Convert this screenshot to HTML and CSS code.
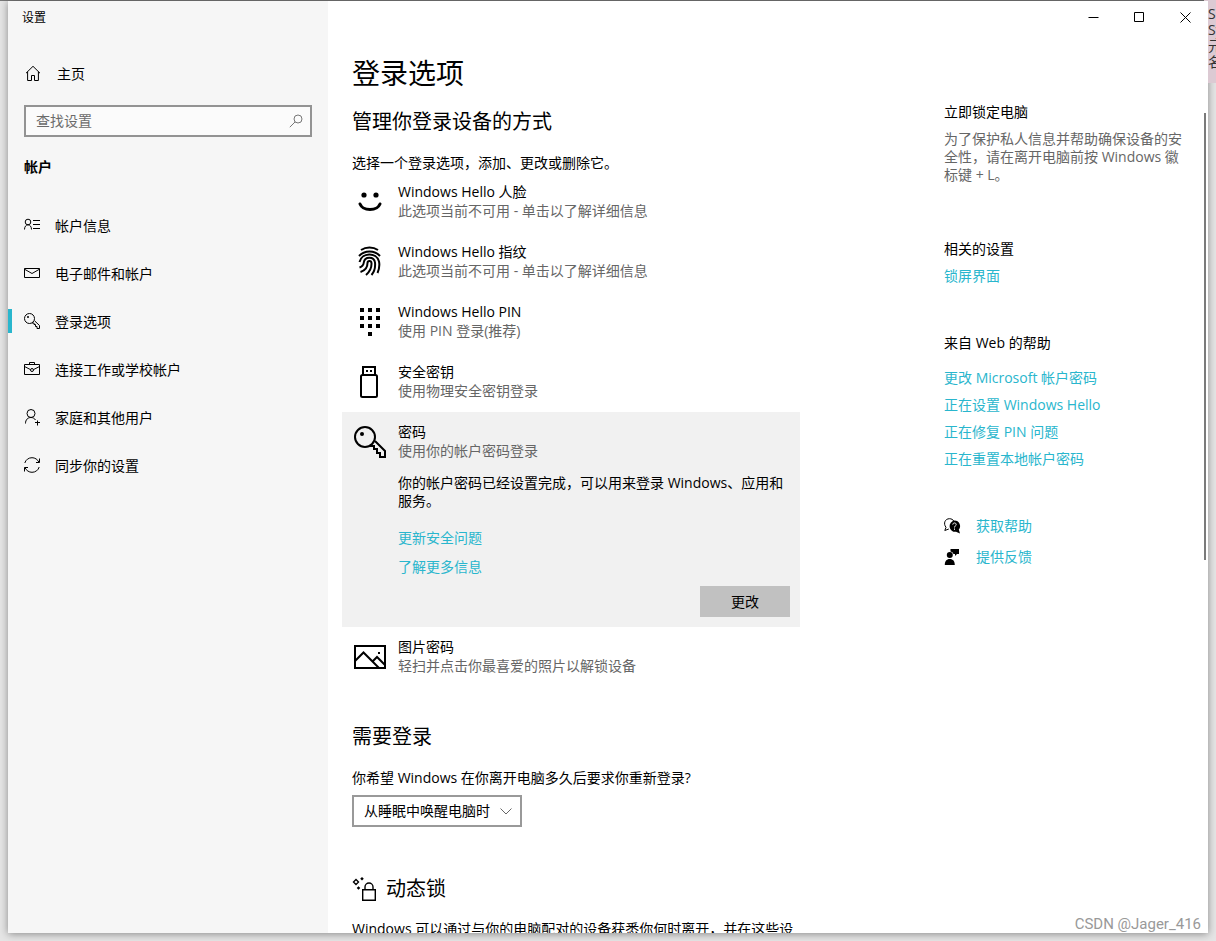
FILE: index.html
```html
<!DOCTYPE html>
<html lang="zh-CN">
<head>
<meta charset="utf-8">
<meta name="viewport" content="width=device-width, initial-scale=1">
<title>设置</title>
<link rel="stylesheet" href="styles.css">
</head>
<body>
<div class="backdrop-note" aria-hidden="true"><span>S</span><span>Sy</span><span>元</span><span>名</span></div>
<div class="window">
  <aside class="sidebar">
    <div class="app-title">设置</div>
    <a class="home" href="#home">
      <svg class="icon16" viewBox="0 0 16 16"><path d="M1 8.2 8 1.3l7 6.9M2.6 6.8v8.7h3.9v-5h3v5h3.9V6.8"/></svg>
      <span>主页</span>
    </a>
    <form class="search">
      <input type="search" class="search-input" placeholder="查找设置" aria-label="查找设置">
      <button type="button" class="search-btn" aria-label="搜索"><svg viewBox="0 0 14 14"><circle cx="9" cy="5" r="4"/><path d="M6.1 7.9.8 13.2"/></svg></button>
    </form>
    <h2 class="side-heading">帐户</h2>
    <nav class="nav">
      <a class="nav-item" href="#info"><svg class="icon16" viewBox="0 0 16 16"><circle cx="4" cy="5" r="2.8"/><path d="M.5 12.500c0-2.800 1.500-4.700 3.500-4.700s3.500 1.900 3.500 4.700M9 3.500h7M9 7.500h7M9 11.500h7"/></svg><span>帐户信息</span></a>
      <a class="nav-item" href="#mail"><svg class="icon16" viewBox="0 0 16 16"><path d="M.5 3.500h15v9H.5zM.5 4.200 8 8.500l7.500-4.300"/></svg><span>电子邮件和帐户</span></a>
      <a class="nav-item is-active" href="#signin" aria-current="page"><svg class="icon16" viewBox="0 0 32 32"><g class="stroke2"><path d="M21 15.500 31 25v6h-5v-4h-3v-4h-3v-3h-4.500"/><circle cx="11" cy="11" r="10"/></g><circle class="solid" cx="8" cy="8" r="2"/></svg><span>登录选项</span></a>
      <a class="nav-item" href="#work"><svg class="icon16" viewBox="0 0 16 16"><path d="M.5 3.500h15v10H.5zM5.500 3.500v-2h5v2M.5 5.500l5.800 3M15.500 5.500l-5.800 3"/><circle cx="8" cy="9" r="1.500"/></svg><span>连接工作或学校帐户</span></a>
      <a class="nav-item" href="#family"><svg class="icon16" viewBox="0 0 16 16"><circle cx="7" cy="4.500" r="4"/><path d="M1.500 14.500c0-3.700 2.200-6 5.500-6 2 0 3.600 1 4.500 2.500M13.500 11.500v5M11 13.500h5"/></svg><span>家庭和其他用户</span></a>
      <a class="nav-item" href="#sync"><svg class="icon16" viewBox="0 0 16 16"><path d="M.8 6C1.800 2.700 4.600.7 8 .7c3 0 5.600 1.700 7 4.600M15.500 1.500v4H12M15.200 10c-1 3.300-3.800 5.300-7.200 5.300-3 0-5.600-1.700-7-4.600M.5 14.500v-4H4"/></svg><span>同步你的设置</span></a>
    </nav>
  </aside>

  <div class="pane">
    <div class="caption">
      <button type="button" aria-label="最小化"><svg viewBox="0 0 11 11"><path d="M.5 5.500h10"/></svg></button>
      <button type="button" aria-label="最大化"><svg viewBox="0 0 11 11"><path d="M.5.5h9v9h-9z"/></svg></button>
      <button type="button" aria-label="关闭"><svg viewBox="0 0 11 11"><path d="m.5.5 10 10M10.500.5l-10 10"/></svg></button>
    </div>
    <div class="columns">
      <main class="content">
        <h1>登录选项</h1>
        <h2>管理你登录设备的方式</h2>
        <p class="intro">选择一个登录选项，添加、更改或删除它。</p>
        <ul class="options">
          <li class="option">
            <svg class="icon32" viewBox="0 0 32 32"><g class="solid"><circle cx="10" cy="9" r="2.600"/><circle cx="22" cy="9" r="2.600"/></g><path class="thick" d="M6 18c1.500 3.600 5.500 5.500 10 5.500s8.500-1.900 10-5.500"/></svg>
            <div class="option-body"><h3>Windows Hello 人脸</h3><p class="muted">此选项当前不可用 - 单击以了解详细信息</p></div>
          </li>
          <li class="option">
            <svg class="icon32" viewBox="0 0 32 32"><path class="stroke2" d="M7 4c5-3.300 12-3.300 17 0M5 10C10.500 4 20.500 3.800 26 10M5.500 16C7.500 6.500 22.500 5.500 25 15.500c.8 3.600.2 7.500-1.500 11.500M5.500 21.500c3-1 4-2.500 4.300-5 .7-6.500 10.400-6.500 11.200 0 .5 5-.8 9.500-3.500 12.500M6.500 26c5-1.500 7-5 7-9 .2-2.700 3.800-2.500 4 .2.200 5-2.200 9-5.500 11.800"/></svg>
            <div class="option-body"><h3>Windows Hello 指纹</h3><p class="muted">此选项当前不可用 - 单击以了解详细信息</p></div>
          </li>
          <li class="option">
            <svg class="icon32" viewBox="0 0 32 32"><path class="solid" d="M6 2h4v4H6zM14 2h4v4h-4zM22 2h4v4h-4zM6 10h4v4H6zM14 10h4v4h-4zM22 10h4v4h-4zM6 18h4v4H6zM14 18h4v4h-4zM22 18h4v4h-4zM14 26h4v4h-4z"/></svg>
            <div class="option-body"><h3>Windows Hello PIN</h3><p class="muted">使用 PIN 登录(推荐)</p></div>
          </li>
          <li class="option">
            <svg class="icon32" viewBox="0 0 32 32"><path class="stroke2" d="M9 9V1h12v8"/><rect class="stroke2" x="7" y="9" width="16" height="22" rx="1.500"/><path class="solid" d="M12 4h2v2h-2zM16 4h2v2h-2z"/></svg>
            <div class="option-body"><h3>安全密钥</h3><p class="muted">使用物理安全密钥登录</p></div>
          </li>
          <li class="option is-open">
            <svg class="icon32" viewBox="0 0 32 32"><path class="stroke2" d="M21 15 31 25v6h-5v-4h-3v-4h-3v-3h-4"/><circle class="stroke2" cx="11" cy="11" r="10"/><circle class="solid" cx="8" cy="8" r="2"/></svg>
            <div class="option-body">
              <h3>密码</h3><p class="muted">使用你的帐户密码登录</p>
              <p class="detail">你的帐户密码已经设置完成，可以用来登录 Windows、应用和服务。</p>
              <a class="detail-link" href="#questions">更新安全问题</a>
              <a class="detail-link" href="#more">了解更多信息</a>
              <button type="button" class="change">更改</button>
            </div>
          </li>
          <li class="option">
            <svg class="icon32" viewBox="0 0 32 32"><path class="stroke2" d="M1 5h30v22H1zM1 20l8.500-8.500L25 27M18.500 20.500l4.500-4.500 8 8"/><path class="solid" d="M24 11h2v2h-2z"/></svg>
            <div class="option-body"><h3>图片密码</h3><p class="muted">轻扫并点击你最喜爱的照片以解锁设备</p></div>
          </li>
        </ul>

        <h2 class="section">需要登录</h2>
        <label class="question" for="require">你希望 Windows 在你离开电脑多久后要求你重新登录?</label>
        <div class="select">
          <select id="require"><option>从睡眠中唤醒电脑时</option><option>从不</option></select>
          <svg viewBox="0 0 12 7"><path d="m.5.5 5.500 5.500L11.500.5"/></svg>
        </div>

        <h2 class="section lock"><svg viewBox="0 0 24 24"><path class="lock-line" d="M10.700 12.700h12.600v10.600H10.700zM13 12.700V10a4 4 0 0 1 8 0v2.700M4 2.500 6.500 5 4 7.500 1.500 5z"/><path class="solid" d="m10 0 1.800 1.800L10 3.600 8.200 1.800zM6.500 9.200l1.800 1.800-1.800 1.800L4.700 11z"/></svg><span>动态锁</span></h2>
        <p class="dynamic">Windows 可以通过与你的电脑配对的设备获悉你何时离开，并在这些设</p>
      </main>

      <aside class="related">
        <section class="lock-now">
          <h3>立即锁定电脑</h3>
          <p class="muted">为了保护私人信息并帮助确保设备的安全性，请在离开电脑前按 Windows 徽标键 + L。</p>
        </section>
        <section class="links">
          <h3>相关的设置</h3>
          <a href="#lockscreen">锁屏界面</a>
        </section>
        <section class="links web-help">
          <h3>来自 Web 的帮助</h3>
          <a href="#h1">更改 Microsoft 帐户密码</a>
          <a href="#h2">正在设置 Windows Hello</a>
          <a href="#h3">正在修复 PIN 问题</a>
          <a href="#h4">正在重置本地帐户密码</a>
        </section>
        <section class="support">
          <a href="#help"><svg class="icon16" viewBox="0 0 16 16"><path d="M.8 12.500 2 9.300C-1 5.500 1 .7 5.500.7c2 0 3.500 1 4.300 2.300M.8 12.500l4-1.500"/><path class="solid" d="M10.500 2.500a5.500 5.500 0 0 1 4.300 9l1.200 4-4-1.700A5.600 5.600 0 1 1 10.500 2.500z"/><path class="mark" d="M8.800 6.600c0-2.200 3.400-2.200 3.400 0 0 1.300-1.700 1.300-1.700 2.900M10.500 10.500v1.300"/></svg><span>获取帮助</span></a>
          <a href="#feedback"><svg class="icon16" viewBox="0 0 16 16"><path class="solid" d="M6.500 0H15v5h-2l-2 2V5H9.500a3.500 3.500 0 0 0-3-2.500zM5.800 3a3 3 0 1 1 0 6 3 3 0 0 1 0-6zM.8 16c0-3.800 1.700-6 5-6s5 2.200 5 6z"/></svg><span>提供反馈</span></a>
        </section>
      </aside>
    </div>
    <div class="scroll-thumb"></div>
  </div>
</div>
<div class="watermark">CSDN @Jager_416</div>
</body>
</html>
```
FILE: styles.css
```css
* { box-sizing: border-box; margin: 0; padding: 0; }

body {
  height: 100vh;
  padding: 1px 8px 8px;
  overflow: hidden;
  position: relative;
  background: linear-gradient(#777 1px, #e5e5e5 1px);
  color: #000;
  font: 14px/19px "Open Sans", "Noto Sans CJK SC", sans-serif;
}

a { color: #29b6cd; text-decoration: none; }
button, input, select { font: inherit; color: inherit; border: 0; border-radius: 0; }
h1, h2, h3 { font-weight: 400; }
h3 { font-size: 14px; }
ul { list-style: none; }
svg { fill: none; stroke: #000; flex: none; }
.stroke2 { stroke-width: 2; }
.thick { stroke-width: 3; stroke-linecap: round; }
.solid { fill: #000; stroke: none; }
.icon16 { width: 16px; height: 16px; overflow: visible; }
.icon32 { width: 32px; height: 32px; }
.muted { color: #666; }

.backdrop-note {
  position: absolute;
  top: 0;
  right: 0;
  width: 12px;
  height: 83px;
  padding-top: 6px;
  overflow: hidden;
  display: flex;
  flex-direction: column;
  background: #dccad3;
  font-size: 14px;
  line-height: 16px;
  color: #333;
}
.backdrop-note span { padding-left: 4px; }

.window {
  position: relative;
  height: 100%;
  display: flex;
  overflow: hidden;
  background: #fff;
}
body::before {
  content: "";
  position: absolute;
  inset: 1px 8px 8px;
  box-shadow: 0 1px 8px #0006;
}

.sidebar { width: 320px; flex: none; background: #f6f6f6; }
.app-title { padding: 7px 14px 0; font-size: 12px; line-height: 19px; }
.home {
  display: flex;
  align-items: center;
  gap: 16px;
  height: 48px;
  margin-top: 22px;
  padding-left: 17px;
  color: #000;
}
.search {
  display: flex;
  height: 32px;
  margin: 8px 16px 0;
  border: 2px solid #939393;
  background: #fbfbfb;
}
.search-input { flex: 1; min-width: 0; padding: 0 10px 2px; background: none; outline: 0; appearance: none; }
.search-input::placeholder { color: #6b6b6b; opacity: 1; }
.search-btn { width: 28px; display: grid; place-items: center; background: none; }
.search-btn svg { width: 14px; height: 14px; stroke: #777; }
.side-heading { margin: 20px 16px 0; font-size: 14px; line-height: 20px; font-weight: 700; }
.nav { margin-top: 24px; }
.nav-item {
  display: flex;
  align-items: center;
  gap: 15px;
  height: 48px;
  padding-left: 16px;
  color: #000;
}
.nav-item.is-active { background: linear-gradient(#29b6cd, #29b6cd) 0 12px / 4px 24px no-repeat; }

.pane { flex: 1; min-width: 0; position: relative; }
.caption { display: flex; justify-content: flex-end; height: 32px; }
.caption button { width: 46px; display: grid; place-items: center; background: none; }
.caption svg { width: 11px; height: 11px; }
.columns {
  display: grid;
  grid-template-columns: minmax(0, 1fr) 240px;
  gap: 144px;
  padding: 0 24px;
}

.content h1 { margin-top: 20px; font-size: 28px; line-height: 40px; }
.content h2 { font-size: 20px; line-height: 28px; }
.content h1 + h2 { margin-top: 15px; }
.intro { margin-top: 17px; }
.options { margin: 0 0 0 -10px; }
.option {
  display: flex;
  gap: 12px;
  min-height: 60px;
  padding: 10px 10px 10px 12px;
}
.option .icon32 { margin-top: 4px; }
.option.is-open { background: #f1f1f1; }
.option-body { flex: 1; min-width: 0; display: flex; flex-direction: column; }
.detail { margin-top: 14px; line-height: 18px; }
.detail-link { margin-top: 10px; }
.detail + .detail-link { margin-top: 18px; }
.change {
  align-self: flex-end;
  width: 90px;
  height: 31px;
  margin-top: 10px;
  background: #c1c1c1;
}

.content .section { margin-top: 36px; }
.question { display: block; margin-top: 17px; }
.select { position: relative; width: 170px; height: 32px; margin-top: 8px; }
.select select {
  width: 100%;
  height: 100%;
  padding: 0 10px 2px;
  border: 2px solid #999;
  background: #fff;
  appearance: none;
}
.select svg { position: absolute; right: 10px; top: 13px; width: 12px; height: 7px; stroke: #666; }
.content .lock { display: flex; align-items: center; gap: 10px; margin-top: 48px; }
.lock svg { width: 24px; height: 24px; }
.lock-line { stroke-width: 1.4; }
.dynamic { margin-top: 16px; white-space: nowrap; }

.related { padding-top: 69px; }
.lock-now .muted { margin-top: 9px; line-height: 18px; }
.links { display: flex; flex-direction: column; gap: 8px; margin-top: 55px; }
.web-help { margin-top: 48px; }
.web-help h3 { margin-bottom: 8px; }
.support { display: flex; flex-direction: column; gap: 12px; margin-top: 48px; }
.support a { display: flex; align-items: center; gap: 16px; }
.mark { stroke: #fff; }

.scroll-thumb {
  position: absolute;
  top: 112px;
  right: 2px;
  width: 2px;
  height: 48%;
  background: #7a7a7a;
}

.watermark {
  position: absolute;
  right: 15px;
  bottom: 7px;
  font: 15px/20px Roboto, sans-serif;
  color: #999;
}
```
